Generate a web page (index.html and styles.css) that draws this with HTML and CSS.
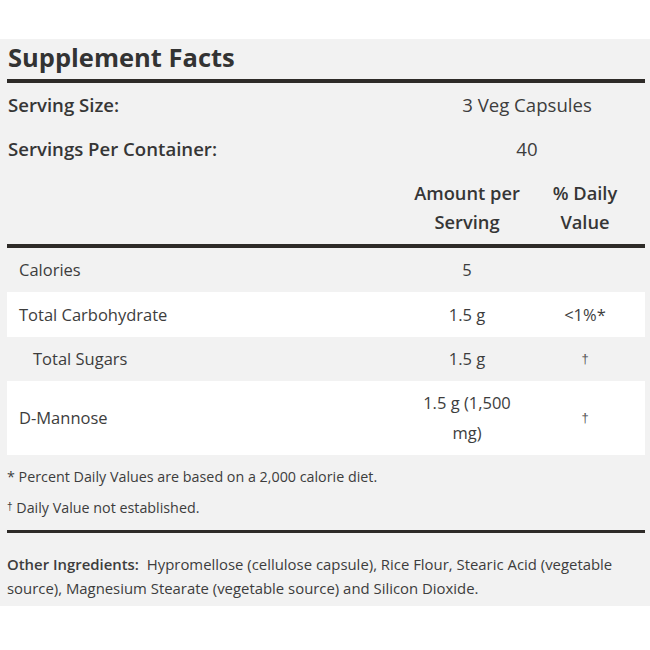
FILE: index.html
```html
<!DOCTYPE html>
<html lang="en">
<head>
<meta charset="utf-8">
<title>Supplement Facts</title>
<link rel="stylesheet" href="styles.css">
</head>
<body>
<section class="panel">
  <h2 class="title">Supplement Facts</h2>
  <div class="row serving first">
    <div class="label">Serving Size:</div>
    <div class="value">3 Veg Capsules</div>
  </div>
  <div class="row serving">
    <div class="label">Servings Per Container:</div>
    <div class="value">40</div>
  </div>
  <div class="row head">
    <div></div>
    <div class="col">Amount per<br>Serving</div>
    <div class="col">% Daily<br>Value</div>
  </div>
  <div class="row nut grey">
    <div class="name">Calories</div>
    <div class="amt">5</div>
    <div class="dv"></div>
  </div>
  <div class="row nut white carb">
    <div class="name">Total Carbohydrate</div>
    <div class="amt">1.5 g</div>
    <div class="dv">&lt;1%*</div>
  </div>
  <div class="row nut grey">
    <div class="name sub">Total Sugars</div>
    <div class="amt">1.5 g</div>
    <div class="dv dag">†</div>
  </div>
  <div class="row nut white tall">
    <div class="name">D-Mannose</div>
    <div class="amt">1.5 g (1,500<br>mg)</div>
    <div class="dv dag">†</div>
  </div>
  <div class="notes">
    <p>* Percent Daily Values are based on a 2,000 calorie diet.</p>
    <p><span class="dg">†</span> Daily Value not established.</p>
  </div>
  <p class="ingredients"><strong>Other Ingredients:</strong> Hypromellose (cellulose capsule), Rice Flour, Stearic Acid (vegetable source), Magnesium Stearate (vegetable source) and Silicon Dioxide.</p>
</section>
</body>
</html>
```
FILE: styles.css
```css
html, body {
  margin: 0;
  padding: 0;
  background: #ffffff;
}
body {
  font-family: "Open Sans", "Lato", sans-serif;
  color: #3d3d3d;
}
.panel {
  margin-top: 39px;
  background: #f2f2f2;
  padding: 0 5px 7px 7px;
  height: 567px;
  box-sizing: border-box;
}
.title {
  margin: 0;
  height: 40px;
  line-height: 37px;
  font-size: 25.5px;
  font-weight: 700;
  color: #333;
  padding-left: 1px;
  border-bottom: 4px solid #2e2b28;
}
.row {
  display: grid;
  grid-template-columns: 402px 116px 120px;
  align-items: center;
}
.serving {
  height: 44px;
  font-size: 18.6px;
}
.serving.first { height: 43px; }
.serving .label {
  font-weight: 600;
  color: #363636;
  padding-left: 1px;
}
.serving .value {
  grid-column: 2 / 4;
  text-align: center;
}
.head {
  height: 74px;
  border-bottom: 4px solid #2e2b28;
  font-size: 18.3px;
  font-weight: 600;
  line-height: 29px;
  color: #363636;
}
.head .col {
  text-align: center;
  white-space: nowrap;
}
.nut {
  height: 44px;
  font-size: 16.5px;
  line-height: 30px;
}
.nut.carb { height: 45px; }
.nut.tall { height: 74px; }
.white { background: #ffffff; }
.nut .name { padding-left: 12px; }
.nut .sub { padding-left: 26px; }
.nut .amt, .nut .dv {
  text-align: center;
  white-space: nowrap;
}
.dag {
  font-family: "Liberation Sans", "DejaVu Sans", sans-serif;
  font-size: 13px;
  color: #555;
}
.notes {
  padding: 7px 0;
  font-size: 14.3px;
  line-height: 30px;
  border-bottom: 3px solid #2e2b28;
}
.notes p { margin: 0; }
.dg {
  font-family: "Liberation Sans", "DejaVu Sans", sans-serif;
  font-size: 10px;
  vertical-align: 3px;
}
.ingredients {
  margin: 0;
  padding: 19px 4px 0 0;
  font-size: 14.9px;
  line-height: 24px;
}
.ingredients strong {
  font-weight: 600;
  margin-right: 4px;
}
```
